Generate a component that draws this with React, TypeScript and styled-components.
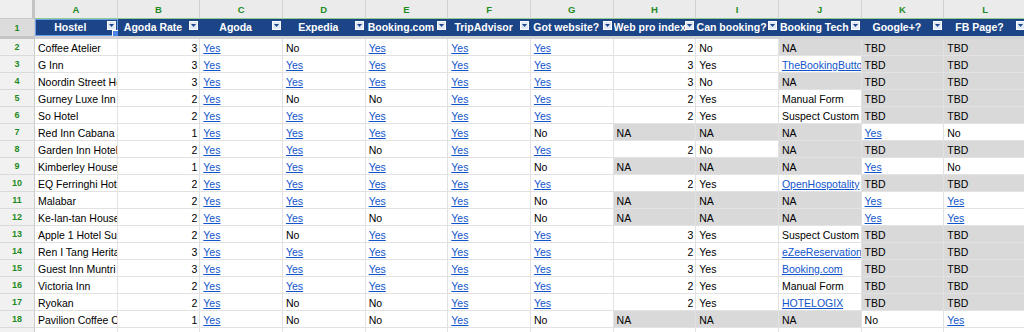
import React from "react";
import styled, { createGlobalStyle, css } from "styled-components";

const GlobalStyle = createGlobalStyle`
  html, body {
    margin: 0;
    padding: 0;
    background: #ffffff;
    overflow: hidden;
  }
  body {
    font-family: "Liberation Sans", Arial, sans-serif;
  }
`;

const COL_W = 82.67;

const Sheet = styled.div`
  display: grid;
  grid-template-columns: 35px repeat(12, ${COL_W}px);
  grid-template-rows: 19px 20px repeat(18, 17px);
  width: 1024px;
  height: 332px;
  overflow: hidden;
  font-family: "Liberation Sans", Arial, sans-serif;
`;

const Corner = styled.div`
  box-sizing: border-box;
  background: #efefef;
  border-right: 3px solid #c4c4c4;
  border-bottom: 1px solid #c9c9c9;
`;

const ColLetter = styled.div`
  box-sizing: border-box;
  background: #ebebeb;
  border-right: 1px solid #d2d2d2;
  border-bottom: 1px solid #8fcd8f;
  color: #1f8b1f;
  font-size: 9.5px;
  font-weight: bold;
  display: flex;
  align-items: center;
  justify-content: center;
  padding-top: 1px;
`;

const RowNum = styled.div<{ $frozen?: boolean }>`
  box-sizing: border-box;
  background: ${(p) => (p.$frozen ? "#dcdcdc" : "#f1f1f1")};
  border-right: 1px solid #cdcdcd;
  border-bottom: ${(p) => (p.$frozen ? "3px solid #c4c4c4" : "1px solid #dadada")};
  color: #1f8b1f;
  font-size: 9px;
  font-weight: bold;
  display: flex;
  align-items: center;
  justify-content: center;
`;

const HeaderCell = styled.div`
  position: relative;
  box-sizing: border-box;
  background: #1c4587;
  border-bottom: 3px solid #d3d3d3;
  color: #ffffff;
  font-size: 10.5px;
  font-weight: bold;
  line-height: 17px;
  white-space: nowrap;
  overflow: hidden;
  padding-right: 12px;
  text-align: center;
`;

const FilterIcon = styled.svg`
  position: absolute;
  right: 2px;
  top: 2px;
  width: 9px;
  height: 9px;
`;

const Selection = styled.div`
  position: absolute;
  inset: 0 0 0 0;
  border: 1px solid #6d9eeb;
  pointer-events: none;
`;

const FillHandle = styled.div`
  position: absolute;
  right: -2px;
  bottom: -2px;
  width: 5px;
  height: 5px;
  background: #4a86e8;
  border: 1px solid #ffffff;
`;

const Cell = styled.div<{ $num?: boolean; $shade?: boolean }>`
  box-sizing: border-box;
  background: ${(p) => (p.$shade ? "#d9d9d9" : "#ffffff")};
  border-right: 1px solid #e2e2e2;
  border-bottom: 1px solid #e2e2e2;
  color: #000000;
  font-size: 10.5px;
  line-height: 16px;
  padding: 1px 3px 0 3px;
  white-space: nowrap;
  overflow: hidden;
  ${(p) =>
    p.$num &&
    css`
      text-align: right;
      padding-right: 2px;
    `}
`;

const Link = styled.span`
  color: #1155cc;
  text-decoration: underline;
`;

const letters = ["A", "B", "C", "D", "E", "F", "G", "H", "I", "J", "K", "L"];
const headers = [
  "Hostel",
  "Agoda Rate",
  "Agoda",
  "Expedia",
  "Booking.com",
  "TripAdvisor",
  "Got website?",
  "Web pro index",
  "Can booking?",
  "Booking Tech",
  "Google+?",
  "FB Page?",
];

// columns whose "Yes" values are hyperlinks
const linkCols = new Set([2, 3, 4, 5, 6, 10, 11]);

type V = string | number | null;

const rows: V[][] = [
  ["Coffee Atelier", 3, "Yes", "No", "Yes", "Yes", "Yes", 2, "No", "NA", "TBD", "TBD"],
  ["G Inn", 3, "Yes", "Yes", "Yes", "Yes", "Yes", 3, "Yes", "@TheBookingButton", "TBD", "TBD"],
  ["Noordin Street Hostel", 3, "Yes", "Yes", "Yes", "Yes", "Yes", 3, "No", "NA", "TBD", "TBD"],
  ["Gurney Luxe Inn", 2, "Yes", "No", "No", "Yes", "Yes", 2, "Yes", "Manual Form", "TBD", "TBD"],
  ["So Hotel", 2, "Yes", "Yes", "Yes", "Yes", "Yes", 2, "Yes", "Suspect Custom", "TBD", "TBD"],
  ["Red Inn Cabana", 1, "Yes", "Yes", "Yes", "Yes", "No", "NA", "NA", "NA", "Yes", "No"],
  ["Garden Inn Hotel", 2, "Yes", "Yes", "No", "Yes", "Yes", 2, "No", "NA", "TBD", "TBD"],
  ["Kimberley House", 1, "Yes", "Yes", "Yes", "Yes", "No", "NA", "NA", "NA", "Yes", "No"],
  ["EQ Ferringhi Hotel", 2, "Yes", "Yes", "Yes", "Yes", "Yes", 2, "Yes", "@OpenHospotality", "TBD", "TBD"],
  ["Malabar", 2, "Yes", "Yes", "Yes", "Yes", "No", "NA", "NA", "NA", "Yes", "Yes"],
  ["Ke-lan-tan House", 2, "Yes", "Yes", "No", "Yes", "No", "NA", "NA", "NA", "Yes", "Yes"],
  ["Apple 1 Hotel Suites", 2, "Yes", "No", "Yes", "Yes", "Yes", 3, "Yes", "Suspect Custom", "TBD", "TBD"],
  ["Ren I Tang Heritage", 3, "Yes", "Yes", "Yes", "Yes", "Yes", 2, "Yes", "@eZeeReservation", "TBD", "TBD"],
  ["Guest Inn Muntri", 3, "Yes", "Yes", "Yes", "Yes", "Yes", 3, "Yes", "@Booking.com", "TBD", "TBD"],
  ["Victoria Inn", 2, "Yes", "Yes", "Yes", "Yes", "Yes", 2, "Yes", "Manual Form", "TBD", "TBD"],
  ["Ryokan", 2, "Yes", "No", "No", "Yes", "Yes", 2, "Yes", "@HOTELOGIX", "TBD", "TBD"],
  ["Pavilion Coffee Chapter", 1, "Yes", "No", "No", "Yes", "No", "NA", "NA", "NA", "No", "Yes"],
  [null, null, null, null, null, null, null, null, null, null, null, null],
];

const Filter = () => (
  <FilterIcon viewBox="0 0 9 9">
    <rect x="0.5" y="0.5" width="8" height="8" fill="#dfe8f7" stroke="#ffffff" strokeWidth="1" />
    <polygon points="2,3 7,3 4.5,6" fill="#1c4587" />
  </FilterIcon>
);

function renderValue(v: V, col: number) {
  if (v === null) return null;
  if (typeof v === "number") return v;
  if (v === "Yes" && linkCols.has(col)) return <Link>Yes</Link>;
  if (v.startsWith("@")) return <Link>{v.slice(1)}</Link>;
  return v;
}

export default function App() {
  return (
    <>
      <GlobalStyle />
      <Sheet>
        <Corner />
        {letters.map((l) => (
          <ColLetter key={l}>{l}</ColLetter>
        ))}
        <RowNum $frozen>1</RowNum>
        {headers.map((h, i) => (
          <HeaderCell key={h}>
            {h}
            <Filter />
            {i === 0 && (
              <Selection>
                <FillHandle />
              </Selection>
            )}
          </HeaderCell>
        ))}
        {rows.map((r, ri) => (
          <React.Fragment key={ri}>
            <RowNum>{ri + 2}</RowNum>
            {r.map((v, ci) => (
              <Cell key={ci} $num={typeof v === "number"} $shade={v === "NA" || v === "TBD"}>
                {renderValue(v, ci)}
              </Cell>
            ))}
          </React.Fragment>
        ))}
      </Sheet>
    </>
  );
}
